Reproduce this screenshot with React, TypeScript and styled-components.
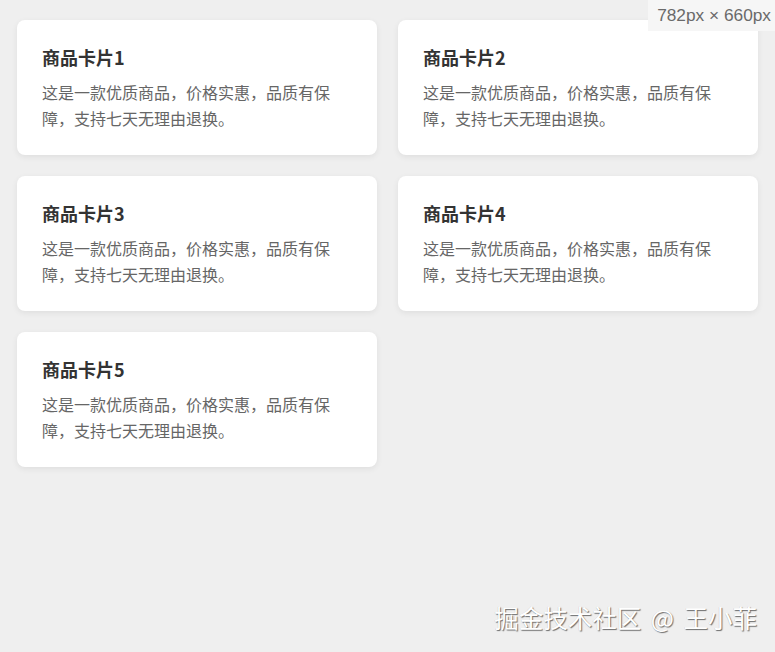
import React from "react";
import styled, { createGlobalStyle } from "styled-components";

const GlobalStyle = createGlobalStyle`
  html, body {
    margin: 0;
    padding: 0;
    background: #efefef;
  }
  body {
    font-family: "Noto Sans CJK SC", "Noto Sans", sans-serif;
  }
`;

const Page = styled.div`
  position: relative;
  width: 775px;
  height: 652px;
  box-sizing: border-box;
  padding: 20px 17px;
  background: #efefef;
  overflow: hidden;
`;

const Grid = styled.div`
  display: grid;
  grid-template-columns: repeat(2, 360px);
  column-gap: 21px;
  row-gap: 21px;
`;

const Card = styled.div`
  box-sizing: border-box;
  height: 135px;
  padding: 24px 25px;
  background: #ffffff;
  border-radius: 8px;
  box-shadow: 0 2px 6px rgba(0, 0, 0, 0.07);
`;

const Title = styled.h3`
  margin: 0 0 9px;
  font-size: 18px;
  line-height: 26px;
  font-weight: 700;
  color: #333333;
`;

const Desc = styled.p`
  margin: 0;
  max-width: 292px;
  font-size: 16px;
  line-height: 26px;
  color: #666666;
`;

const SizeTag = styled.div`
  position: absolute;
  top: 0;
  right: 0;
  width: 127px;
  height: 31px;
  display: flex;
  align-items: center;
  justify-content: flex-end;
  padding-right: 4px;
  box-sizing: border-box;
  background: #f6f6f6;
  color: #6a6a6a;
  font-family: "Liberation Sans", Arial, sans-serif;
  font-size: 17.3px;
`;

const Watermark = styled.div`
  position: absolute;
  right: 18px;
  bottom: 20px;
  color: #ffffff;
  font-family: "Noto Sans CJK SC", sans-serif;
  font-size: 24.5px;
  line-height: 28px;
  word-spacing: 4px;
  text-shadow: 1px 1px 1px rgba(0, 0, 0, 0.55), -0.5px -0.5px 0 rgba(0, 0, 0, 0.15);
`;

const products = [1, 2, 3, 4, 5];

export default function App() {
  return (
    <>
      <GlobalStyle />
      <Page>
        <Grid>
          {products.map((n) => (
            <Card key={n}>
              <Title>商品卡片{n}</Title>
              <Desc>这是一款优质商品，价格实惠，品质有保障，支持七天无理由退换。</Desc>
            </Card>
          ))}
        </Grid>
        <SizeTag>782px × 660px</SizeTag>
        <Watermark>掘金技术社区 @ 王小菲</Watermark>
      </Page>
    </>
  );
}
